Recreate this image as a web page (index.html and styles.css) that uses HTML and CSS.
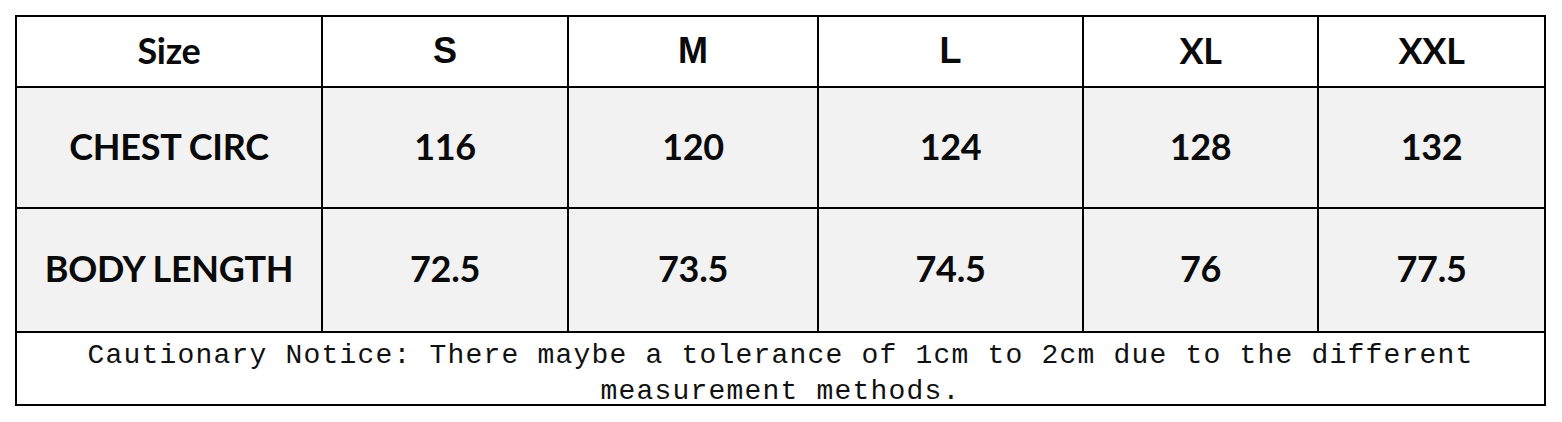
FILE: index.html
```html
<!DOCTYPE html>
<html>
<head>
<meta charset="utf-8">
<link rel="stylesheet" href="styles.css">
</head>
<body>
<div class="chart">
  <div class="cell head label">Size</div>
  <div class="cell head arial">S</div>
  <div class="cell head arial">M</div>
  <div class="cell head arial">L</div>
  <div class="cell head">XL</div>
  <div class="cell head">XXL</div>

  <div class="cell data label">CHEST CIRC</div>
  <div class="cell data">116</div>
  <div class="cell data">120</div>
  <div class="cell data">124</div>
  <div class="cell data">128</div>
  <div class="cell data">132</div>

  <div class="cell data label">BODY LENGTH</div>
  <div class="cell data">72.5</div>
  <div class="cell data">73.5</div>
  <div class="cell data">74.5</div>
  <div class="cell data">76</div>
  <div class="cell data">77.5</div>

  <div class="cell notice">Cautionary Notice: There maybe a tolerance of 1cm to 2cm due to the different measurement methods.</div>
</div>
</body>
</html>
```
FILE: styles.css
```css
html, body {
  margin: 0;
  padding: 0;
  background: #ffffff;
}

body {
  padding: 15px 0 0 15px;
}

.chart {
  display: grid;
  width: 1527px;
  grid-template-columns: 304px 244px 248px 263px 233px 225px;
  grid-template-rows: 69px 119px 122px 71px;
  gap: 2px;
  padding: 2px;
  background: #000000;
}

.cell {
  display: flex;
  align-items: center;
  justify-content: center;
  padding-bottom: 4px;
  font-family: Lato, "Open Sans", sans-serif;
  font-weight: 700;
  font-size: 36px;
  letter-spacing: -0.3px;
  color: #0a0a0a;
}

.head {
  background: #ffffff;
}

.arial {
  font-family: "Liberation Sans", Arial, sans-serif;
  font-size: 36px;
  letter-spacing: 0;
  padding-bottom: 2px;
}

.data {
  background: #f2f2f2;
}

.notice {
  grid-column: 1 / -1;
  background: #ffffff;
  font-family: "Liberation Mono", monospace;
  font-weight: 400;
  font-size: 28px;
  letter-spacing: 1.2px;
  line-height: 36px;
  text-align: center;
  padding: 10px 60px 0;
  color: #111111;
}
```
